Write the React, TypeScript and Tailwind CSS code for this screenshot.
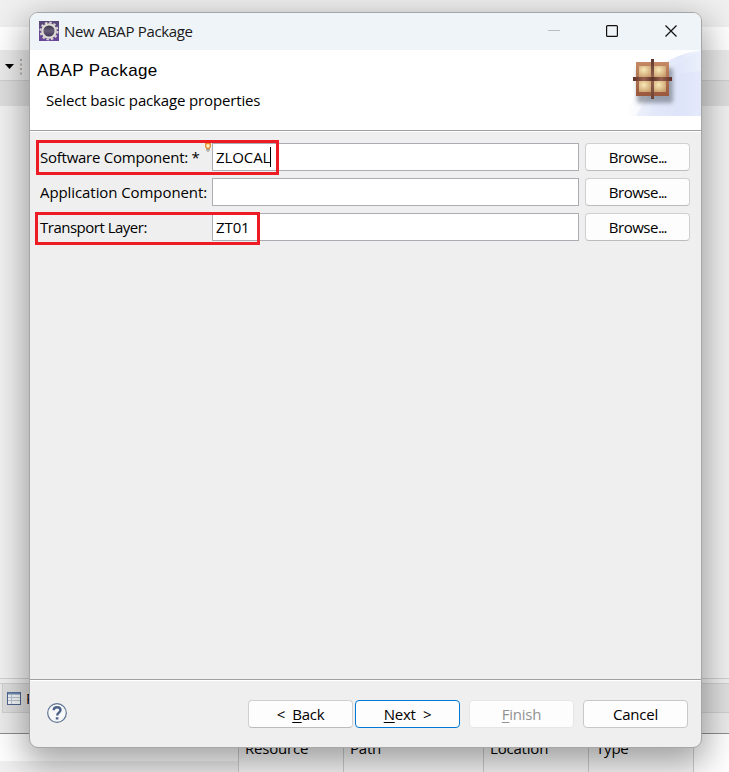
import { ReactNode } from "react";
import clsx from "clsx";

const rows = [
  { label: "Software Component: *", value: "ZLOCAL", focused: true, labelClass: "tracking-[-0.25px]", mark: "left-[-4px] top-[-3px] w-[243px] h-[35px]" },
  { label: "Application Component:", value: "", focused: false, labelClass: "tracking-[-0.08px]", mark: "" },
  { label: "Transport Layer:", value: "ZT01", focused: false, labelClass: "tracking-[-0.5px]", mark: "left-[-5px] top-[-1px] w-[225px] h-[33px]" },
];

function EclipseIcon() {
  return (
    <svg width="20" height="20" viewBox="0 0 20 20">
      <defs>
        <linearGradient id="eclipseBg" x1="0" y1="0" x2="0" y2="1">
          <stop offset="0" stopColor="#584776" />
          <stop offset="1" stopColor="#69479c" />
        </linearGradient>
        <linearGradient id="eclipseCore" x1="0" y1="0" x2="0" y2="1">
          <stop offset="0" stopColor="#30293c" />
          <stop offset="0.5" stopColor="#686079" />
          <stop offset="1" stopColor="#342a4e" />
        </linearGradient>
      </defs>
      <rect width="20" height="20" fill="url(#eclipseBg)" />
      <circle cx="10" cy="10" r="8.500" fill="none" stroke="#d8d3cf" strokeWidth="2" strokeDasharray="2.45 2" />
      <circle cx="10" cy="10" r="6.700" fill="url(#eclipseCore)" stroke="#dedbd5" strokeWidth="2.200" />
    </svg>
  );
}

function PackageBanner() {
  return (
    <svg width="75" height="66" viewBox="0 0 75 66" className="block">
      <defs>
        <linearGradient id="sweep" x1="0" x2="1">
          <stop offset="0" stopColor="#ffffff" />
          <stop offset="0.35" stopColor="#eff3fc" />
          <stop offset="0.72" stopColor="#e2e8fa" />
          <stop offset="1" stopColor="#f2f6fe" />
        </linearGradient>
        <linearGradient id="frame" x1="0" y1="0" x2="0" y2="1">
          <stop offset="0" stopColor="#c58a64" />
          <stop offset="1" stopColor="#99573d" />
        </linearGradient>
        <radialGradient id="pane" cx="0.4" cy="0.35" r="0.75">
          <stop offset="0" stopColor="#f8e9b6" />
          <stop offset="1" stopColor="#c99c6c" />
        </radialGradient>
        <linearGradient id="barV" x1="0" y1="0" x2="0" y2="1">
          <stop offset="0" stopColor="#5e382d" />
          <stop offset="0.5" stopColor="#976350" />
          <stop offset="1" stopColor="#6a4033" />
        </linearGradient>
        <linearGradient id="barH" x1="0" x2="1">
          <stop offset="0" stopColor="#5e3028" />
          <stop offset="0.28" stopColor="#99624d" />
          <stop offset="0.5" stopColor="#5c342a" />
          <stop offset="0.72" stopColor="#99624d" />
          <stop offset="1" stopColor="#5e3028" />
        </linearGradient>
        <filter id="soft" x="-30%" y="-30%" width="160%" height="160%">
          <feGaussianBlur stdDeviation="2" />
        </filter>
      </defs>
      <path d="M0 66 Q20 8 75 0 V66 Z" fill="url(#sweep)" />
      <path d="M22 66 Q44 10 75 1 V66 Z" fill="#dfe6fa" opacity="0.35" />
      <path d="M10 66 Q32 22 75 21 V66 Z" fill="#d9e0f7" opacity="0.4" />
      <rect x="11" y="18" width="36" height="35" rx="2" fill="#58606c" opacity="0.55" filter="url(#soft)" />
      <g transform="translate(1 0)">
        <rect x="9" y="12" width="33" height="34" fill="url(#frame)" />
        <rect x="12" y="16" width="12" height="11" fill="url(#pane)" />
        <rect x="27" y="16" width="12" height="11" fill="url(#pane)" />
        <rect x="12" y="31" width="12" height="11" fill="url(#pane)" />
        <rect x="27" y="31" width="12" height="11" fill="url(#pane)" />
        <rect x="24" y="9" width="3" height="40" fill="url(#barV)" />
        <rect x="6" y="27" width="39" height="4" fill="url(#barH)" />
      </g>
    </svg>
  );
}

function PushButton({ children, className }: { children: ReactNode; className?: string }) {
  return (
    <button
      className={clsx(
        "h-7 w-[105px] shrink-0 rounded-[4px] border bg-[#fdfdfd] text-center leading-[26px] tracking-[-0.25px] whitespace-pre",
        className ?? "border-[#d0d0d0] border-b-[#bcbcbc]"
      )}
    >
      {children}
    </button>
  );
}

function Workbench() {
  return (
    <div className="flex h-full flex-col bg-[#f0f0f0]">
      <div className="h-[27px] bg-[#f0f0f0]" />
      <div className="h-[23px] bg-white" />
      <div className="flex h-[31px] items-center border-b border-[#cfcfcf] bg-[#ebebeb] pt-px pl-[5px]">
        <svg width="26" height="18" viewBox="0 0 26 18">
          <path d="M0 7h9L4.500 12z" fill="#000" />
          <path d="M15 2h2v2h-2zM15 6.500h2v2h-2zM15 11h2v2h-2zM15 15.500h2v2h-2z" fill="#b7b0a8" />
        </svg>
      </div>
      <div className="h-[25px] bg-[#dedede]" />
      <div className="grow bg-[#f2f2f2]" />
      <div className="h-[6px] border-y border-[#d0d0d0] bg-[#f0f0f0]" />
      <div className="h-[50px] border-b border-[#8d8d8d] bg-[#ececec] pl-[2px]">
        <div className="flex h-[29px] items-center gap-[5px] border-b border-l border-[#d0d0d0] bg-[#e0e0e0] pl-[4px]">
          <svg width="14" height="13" viewBox="0 0 14 13">
            <rect x="0.500" y="0.500" width="13" height="12" fill="#f5f8fa" stroke="#4f688f" />
            <path d="M1 1.500h12" stroke="#6d89ae" strokeWidth="2" />
            <path d="M4.500 2v10M1 5.500h12M1 8.500h12" stroke="#b9c5d1" />
          </svg>
          <span className="pt-px">Problems</span>
        </div>
      </div>
      <div className="flex h-[38px] leading-[28px] tracking-[-0.2px]">
        <div className="flex w-[238px] flex-col">
          <div className="grow bg-white" />
          <div className="h-[11px] bg-[#f0f0f0]" />
        </div>
        <div className="w-[105px] border-l border-[#cfcfcf] bg-[#fafafa] pl-[6px]">Resource</div>
        <div className="w-[140px] border-l border-[#cfcfcf] bg-[#fafafa] pl-[6px]">Path</div>
        <div className="w-[105px] border-l border-[#cfcfcf] bg-[#fafafa] pl-[6px]">Location</div>
        <div className="w-[105px] border-l border-[#cfcfcf] bg-[#fafafa] pl-[7px]">Type</div>
        <div className="grow border-l border-[#cfcfcf] bg-white" />
      </div>
    </div>
  );
}

function TitleBar() {
  return (
    <div className="flex h-[37px] shrink-0 items-center bg-[#eff4f8] pb-[2px] pl-[9px]">
      <EclipseIcon />
      <span className="ml-[5px] grow pt-px text-[15px] tracking-[-0.34px] text-[#1a1a1a]">New ABAP Package</span>
      <svg width="131" height="14" viewBox="0 0 131 14" className="mr-[22px]" fill="none">
        <path d="M0 6.500h12" stroke="#b9bec2" />
        <rect x="58.600" y="1.600" width="10.800" height="10.800" rx="1" stroke="#111" strokeWidth="1.200" />
        <path d="M117.500 1.500l11 11M128.500 1.500l-11 11" stroke="#111" strokeWidth="1.200" />
      </svg>
    </div>
  );
}

export default function App() {
  return (
    <div className="relative h-[772px] w-[729px] overflow-hidden font-['Open_Sans','Noto_Sans',sans-serif] text-[15px] text-black">
      <Workbench />

      <div className="absolute top-[12px] left-[29px] flex h-[736px] w-[673px] flex-col overflow-hidden rounded-[9px] border border-[#a6a6a6] bg-[#efefef] shadow-[0_12px_34px_4px_rgba(0,0,0,0.36)]">
        <TitleBar />

        <div className="flex h-[81px] shrink-0 justify-between border-b border-[#a0a0a0] bg-white">
          <div className="pl-[7px]">
            <h1 className="mt-[10px] font-['Liberation_Sans',sans-serif] text-[17px] leading-[22px] tracking-[0.4px]">ABAP Package</h1>
            <p className="mt-[8px] ml-[9px] leading-[20px] tracking-[-0.15px]">Select basic package properties</p>
          </div>
          <PackageBanner />
        </div>

        <div className="flex grow flex-col gap-[7px] border-t border-white pt-[11px] pl-[10px]">
          {rows.map((row) => (
            <div key={row.label} className="relative flex h-7 items-center">
              <span className={clsx("w-[172px] leading-7 whitespace-nowrap", row.labelClass)}>{row.label}</span>
              <div className="flex h-7 w-[367px] items-center border border-[#abadb3] bg-white pl-[3px]">
                <span className="leading-[26px] tracking-[-0.1px]">{row.value}</span>
                {row.focused && <span className="h-5 w-px bg-black" />}
              </div>
              <div className="ml-[6px]">
                <PushButton>
                  <span className="tracking-[-0.5px]">Browse</span>
                  <span className="tracking-[-1.200px]">...</span>
                </PushButton>
              </div>
              {row.focused && (
                <svg width="6" height="9" viewBox="0 0 6 9" className="absolute top-0 left-[165px]" fill="none">
                  <path d="M0.700 0.500h4.600v3L4 5.500H2L0.700 3.500z" fill="#fff2d0" stroke="#e58a24" strokeWidth="1.300" />
                  <path d="M2 6v1.500L3 8.500l1-1V6" stroke="#777" />
                </svg>
              )}
              {row.mark && <div className={clsx("absolute border-3 border-[#ed1c24]", row.mark)} />}
            </div>
          ))}
        </div>

        <div className="flex h-[68px] shrink-0 items-start border-t border-[#a0a0a0] pl-[17px] shadow-[inset_0_1px_0_#fff]">
          <svg width="20" height="20" viewBox="0 0 20 20" className="mt-[23px] mr-[181px]" fill="none">
            <circle cx="10" cy="10" r="9.300" fill="#f7f8fa" stroke="#5f7492" strokeWidth="1.200" />
            <path d="M6.700 7.300C6.700 5.200 8 4.300 10 4.300s3.500 1 3.500 2.800c0 2.500-3.300 2.500-3.300 5.300" stroke="#4e6389" strokeWidth="2.400" />
            <path d="M8.800 14.200h2.600v2.300H8.800z" fill="#4e6389" />
          </svg>
          <div className="mt-[20px] flex">
            <PushButton>
              {"<  "}<u className="underline-offset-2">B</u>ack
            </PushButton>
            <PushButton className="ml-[2px] border-[#0078d4]">
              <u className="underline-offset-2">N</u>{"ext  >"}
            </PushButton>
            <PushButton className="ml-[9px] border-[#e6e6e6] bg-[#f8f8f8] text-[#929292]">
              <u className="underline-offset-2">F</u>inish
            </PushButton>
            <PushButton className="ml-[9px] border-[#c8c8c8]">Cancel</PushButton>
          </div>
        </div>
      </div>
    </div>
  );
}
